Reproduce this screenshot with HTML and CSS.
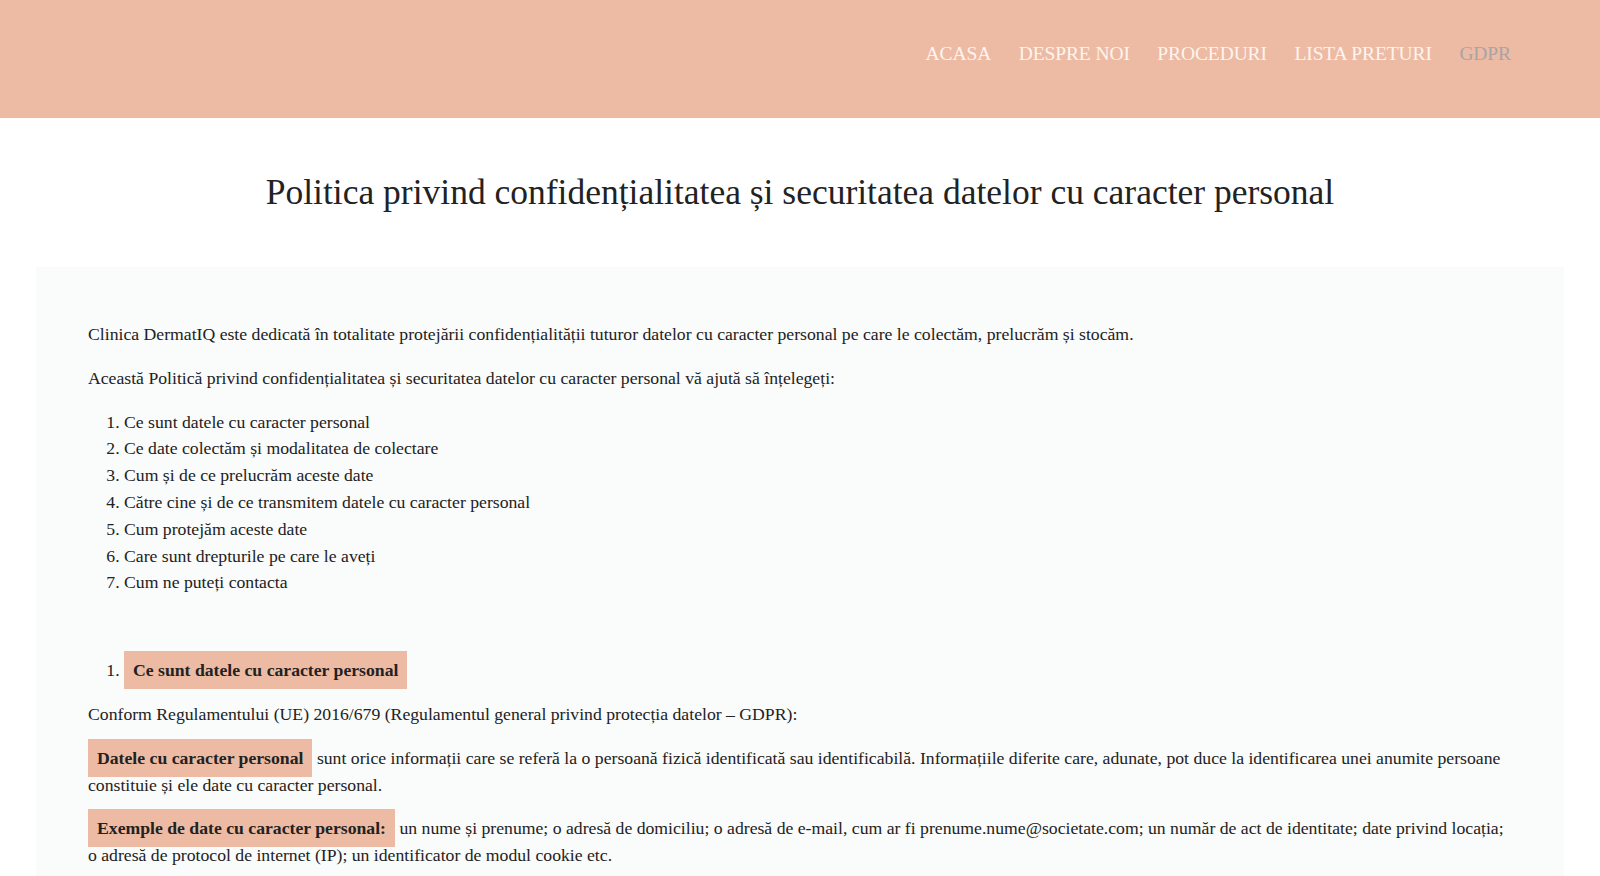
FILE: index.html
```html
<!DOCTYPE html>
<html lang="ro">
<head>
<meta charset="utf-8">
<title>GDPR - DermatIQ</title>
<link rel="stylesheet" href="styles.css">
</head>
<body>
<header class="site-header">
  <nav class="main-nav">
    <a href="#" class="nav-link">ACASA</a>
    <a href="#" class="nav-link">DESPRE NOI</a>
    <a href="#" class="nav-link">PROCEDURI</a>
    <a href="#" class="nav-link">LISTA PRETURI</a>
    <a href="#" class="nav-link nav-active">GDPR</a>
  </nav>
</header>
<main class="page">
  <h1 class="page-title">Politica privind confidențialitatea și securitatea datelor cu caracter personal</h1>
  <section class="content-box">
    <p>Clinica DermatIQ este dedicată în totalitate protejării confidențialității tuturor datelor cu caracter personal pe care le colectăm, prelucrăm și stocăm.</p>
    <p>Această Politică privind confidențialitatea și securitatea datelor cu caracter personal vă ajută să înțelegeți:</p>
    <ol class="toc">
      <li>Ce sunt datele cu caracter personal</li>
      <li>Ce date colectăm și modalitatea de colectare</li>
      <li>Cum și de ce prelucrăm aceste date</li>
      <li>Către cine și de ce transmitem datele cu caracter personal</li>
      <li>Cum protejăm aceste date</li>
      <li>Care sunt drepturile pe care le aveți</li>
      <li>Cum ne puteți contacta</li>
    </ol>
    <ol class="section-head">
      <li><span class="hl">Ce sunt datele cu caracter personal</span></li>
    </ol>
    <p>Conform Regulamentului (UE) 2016/679 (Regulamentul general privind protecția datelor – GDPR):</p>
    <p><span class="hl">Datele cu caracter personal</span> sunt orice informații care se referă la o persoană fizică identificată sau identificabilă. Informațiile diferite care, adunate, pot duce la identificarea unei anumite persoane constituie și ele date cu caracter personal.</p>
    <p><span class="hl">Exemple de date cu caracter personal:</span> un nume și prenume; o adresă de domiciliu; o adresă de e-mail, cum ar fi prenume.nume@societate.com; un număr de act de identitate; date privind locația; o adresă de protocol de internet (IP); un identificator de modul cookie etc.</p>
  </section>
</main>
</body>
</html>
```
FILE: styles.css
```css
html, body {
  margin: 0;
  padding: 0;
}
body {
  background: #ffffff;
  color: #222222;
  font-family: "Liberation Serif", "Times New Roman", serif;
  font-size: 17.7px;
  line-height: 26.8px;
}
.site-header {
  background: #edbba4;
  height: 118px;
  display: flex;
  justify-content: flex-end;
  align-items: flex-start;
  padding: 0 89px 0 0;
  box-sizing: border-box;
}
.main-nav {
  display: flex;
  gap: 27.5px;
  padding-top: 40px;
}
.nav-link {
  font-family: "Liberation Serif", "Times New Roman", serif;
  font-size: 19.5px;
  line-height: 28px;
  color: #fdf4ee;
  text-decoration: none;
  letter-spacing: -0.1px;
}
.nav-active {
  color: #a9a3a6;
}
.page {
  padding: 0 36px;
}
.page-title {
  margin: 0;
  padding: 51px 0 0;
  height: 149px;
  box-sizing: border-box;
  text-align: center;
  font-weight: normal;
  font-size: 35.5px;
  line-height: 46px;
  color: #222222;
}
.content-box {
  background: #fafbfb;
  padding: 54px 52px 20px;
}
.content-box p {
  margin: 0 0 17px;
}
.content-box ol {
  margin: 0 0 17px;
  padding-left: 36px;
}
.toc {
  margin-bottom: 61px !important;
}
.hl {
  background: #edbba4;
  font-weight: bold;
  padding: 9px 9px;
}
.section-head li::marker {
  font-weight: normal;
}
```
